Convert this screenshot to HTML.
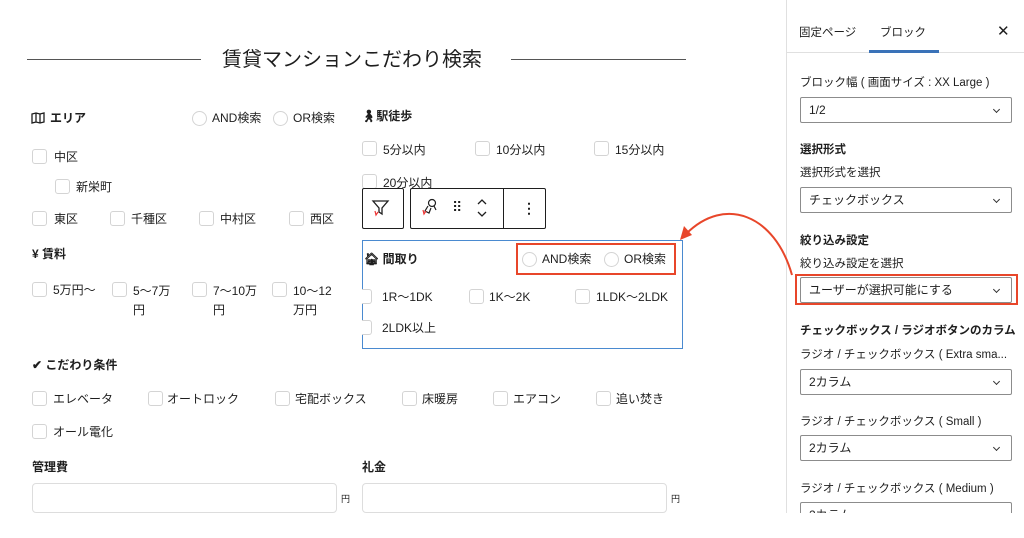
<!DOCTYPE html>
<html><head><meta charset="utf-8"><style>
*{margin:0;padding:0;box-sizing:border-box}
body{width:1024px;height:538px;background:#fff;position:relative;overflow:hidden;font-family:"Liberation Sans","Noto Sans CJK JP",sans-serif;color:#1e1e1e;font-size:12px}
.a{position:absolute;white-space:nowrap;line-height:16px}
.cb{position:absolute;width:15px;height:15px;border:1px solid #d4d4d4;border-radius:3px;background:#fff}
.rd{position:absolute;width:15px;height:15px;border:1px solid #d4d4d4;border-radius:50%;background:#fff}
.b{font-weight:bold}
.sel{position:absolute;left:800px;width:212px;height:26px;border:1px solid #8c8c8c;border-radius:2px;font-size:12px;line-height:24px;padding-left:8px}
.sel:after{content:"";position:absolute;right:12px;top:9px;width:4px;height:4px;border-right:1.2px solid #333;border-bottom:1.2px solid #333;transform:rotate(45deg)}
.inp{position:absolute;height:30px;border:1px solid #ddd;border-radius:4px}
.sb{font-size:11.5px}
</style></head><body>
<div style="position:absolute;left:27px;top:59px;width:174px;height:1px;background:#555"></div>
<div style="position:absolute;left:511px;top:59px;width:175px;height:1px;background:#555"></div>
<div class="a" style="left:222px;top:47px;font-size:20px;line-height:26px">賃貸マンションこだわり検索</div>

<!-- エリア -->
<svg class="a" style="left:31px;top:112px" width="14" height="12" viewBox="0 0 14 12"><path d="M1 2l4-1 4 1 4-1v9l-4 1-4-1-4 1z M5 1v9 M9 2v9" fill="none" stroke="#1e1e1e" stroke-width="1.3"/></svg>
<div class="a b" style="left:50px;top:110px">エリア</div>
<div class="rd" style="left:192px;top:111px"></div><div class="a" style="left:212px;top:110px">AND検索</div>
<div class="rd" style="left:273px;top:111px"></div><div class="a" style="left:293px;top:110px">OR検索</div>
<div class="cb" style="left:32px;top:149px"></div><div class="a" style="left:54px;top:149px">中区</div>
<div class="cb" style="left:55px;top:179px"></div><div class="a" style="left:76px;top:179px">新栄町</div>
<div class="cb" style="left:32px;top:211px"></div><div class="a" style="left:54px;top:211px">東区</div>
<div class="cb" style="left:110px;top:211px"></div><div class="a" style="left:131px;top:211px">千種区</div>
<div class="cb" style="left:199px;top:211px"></div><div class="a" style="left:220px;top:211px">中村区</div>
<div class="cb" style="left:289px;top:211px"></div><div class="a" style="left:310px;top:211px">西区</div>
<div class="a b" style="left:32px;top:246px">¥ 賃料</div>
<div class="cb" style="left:32px;top:282px"></div><div class="a" style="left:53px;top:282px">5万円〜</div>
<div class="cb" style="left:112px;top:282px"></div><div class="a" style="left:133px;top:282px;line-height:19px">5〜7万<br>円</div>
<div class="cb" style="left:192px;top:282px"></div><div class="a" style="left:213px;top:282px;line-height:19px">7〜10万<br>円</div>
<div class="cb" style="left:272px;top:282px"></div><div class="a" style="left:293px;top:282px;line-height:19px">10〜12<br>万円</div>

<!-- 駅徒歩 -->
<div class="a b" style="left:361px;top:108px">🚶︎駅徒歩</div>
<div class="cb" style="left:362px;top:141px"></div><div class="a" style="left:383px;top:142px">5分以内</div>
<div class="cb" style="left:475px;top:141px"></div><div class="a" style="left:496px;top:142px">10分以内</div>
<div class="cb" style="left:594px;top:141px"></div><div class="a" style="left:615px;top:142px">15分以内</div>
<div class="cb" style="left:362px;top:174px"></div><div class="a" style="left:383px;top:175px">20分以内</div>

<!-- toolbar -->
<div style="position:absolute;left:362px;top:188px;width:42px;height:41px;border:1px solid #1e1e1e;border-radius:2px;background:#fff"></div>
<svg class="a" style="left:370px;top:198px" width="22" height="20" viewBox="0 0 22 20"><path d="M3 3h15l-6 7v6l-3-2v-4z" fill="none" stroke="#1e1e1e" stroke-width="1.3"/><path d="M5 13l1 4 2-3" fill="none" stroke="#e33" stroke-width="1.2"/></svg>
<div style="position:absolute;left:410px;top:188px;width:136px;height:41px;border:1px solid #1e1e1e;border-radius:2px;background:#fff"></div>
<div style="position:absolute;left:503px;top:188px;width:1px;height:41px;background:#1e1e1e"></div>
<svg class="a" style="left:418px;top:196px" width="24" height="24" viewBox="0 0 24 24"><circle cx="14" cy="7" r="3.5" fill="none" stroke="#1e1e1e" stroke-width="1.2"/><path d="M10 10l-3 5 4 2 2-5 M16 10l2 4" fill="none" stroke="#1e1e1e" stroke-width="1.2"/><path d="M5 14l1 4 2-3" fill="none" stroke="#e33" stroke-width="1.2"/></svg>
<div class="a" style="left:452px;top:200px;font-size:14px;line-height:14px;letter-spacing:-1px">⠿</div>
<svg class="a" style="left:476px;top:197px" width="12" height="22" viewBox="0 0 12 22"><path d="M2 7l4-4 4 4 M2 15l4 4 4-4" fill="none" stroke="#1e1e1e" stroke-width="1.3"/></svg>
<div class="a" style="left:522px;top:200px;font-size:14px;line-height:16px;font-weight:bold">⋮</div>

<!-- 間取り -->
<div style="position:absolute;left:362px;top:240px;width:321px;height:109px;border:1px solid #4a8ad0"></div>
<div class="a b" style="left:364px;top:251px">🏠︎ 間取り</div>
<div style="position:absolute;left:516px;top:243px;width:160px;height:32px;border:2px solid #e8462a"></div>
<div class="rd" style="left:522px;top:252px"></div><div class="a" style="left:542px;top:251px">AND検索</div>
<div class="rd" style="left:604px;top:252px"></div><div class="a" style="left:624px;top:251px">OR検索</div>
<div class="cb" style="left:362px;top:289px;border-left:none;border-radius:0 3px 3px 0;width:10px"></div><div class="a" style="left:382px;top:289px">1R〜1DK</div>
<div class="cb" style="left:469px;top:289px"></div><div class="a" style="left:489px;top:289px">1K〜2K</div>
<div class="cb" style="left:575px;top:289px"></div><div class="a" style="left:596px;top:289px">1LDK〜2LDK</div>
<div class="cb" style="left:362px;top:320px;border-left:none;border-radius:0 3px 3px 0;width:10px"></div><div class="a" style="left:382px;top:320px">2LDK以上</div>

<!-- こだわり -->
<div class="a b" style="left:32px;top:357px">✔ こだわり条件</div>
<div class="cb" style="left:32px;top:391px"></div><div class="a" style="left:53px;top:391px">エレベータ</div>
<div class="cb" style="left:148px;top:391px"></div><div class="a" style="left:167px;top:391px">オートロック</div>
<div class="cb" style="left:275px;top:391px"></div><div class="a" style="left:295px;top:391px">宅配ボックス</div>
<div class="cb" style="left:402px;top:391px"></div><div class="a" style="left:422px;top:391px">床暖房</div>
<div class="cb" style="left:493px;top:391px"></div><div class="a" style="left:513px;top:391px">エアコン</div>
<div class="cb" style="left:596px;top:391px"></div><div class="a" style="left:616px;top:391px">追い焚き</div>
<div class="cb" style="left:32px;top:424px"></div><div class="a" style="left:53px;top:424px">オール電化</div>
<div class="a b" style="left:32px;top:459px">管理費</div>
<div class="a b" style="left:362px;top:459px">礼金</div>
<div class="inp" style="left:32px;top:483px;width:305px"></div><div class="a" style="left:341px;top:491px;font-size:9px">円</div>
<div class="inp" style="left:362px;top:483px;width:305px"></div><div class="a" style="left:671px;top:491px;font-size:9px">円</div>
<div style="position:absolute;left:0;top:513px;width:1024px;height:25px;background:#fff"></div>

<!-- sidebar -->
<div style="position:absolute;left:786px;top:0;width:238px;height:513px;border-left:1px solid #e0e0e0;background:#fff;overflow:hidden">
<div style="position:absolute;left:0;top:52px;width:238px;height:1px;background:#e0e0e0"></div>
<div style="position:absolute;left:82px;top:50px;width:70px;height:3px;background:#3a72b8"></div>
</div>
<div class="a sb" style="left:799px;top:25px">固定ページ</div>
<div class="a sb" style="left:880px;top:25px">ブロック</div>
<div class="a" style="left:997px;top:24px;font-size:15px">✕</div>
<div class="a sb" style="left:800px;top:75px">ブロック幅 ( 画面サイズ : XX Large )</div>
<div class="sel" style="top:97px">1/2</div>
<div class="a sb b" style="left:800px;top:142px">選択形式</div>
<div class="a sb" style="left:800px;top:165px">選択形式を選択</div>
<div class="sel" style="top:187px">チェックボックス</div>
<div class="a sb b" style="left:800px;top:233px">絞り込み設定</div>
<div class="a sb" style="left:800px;top:256px">絞り込み設定を選択</div>
<div style="position:absolute;left:795px;top:274px;width:223px;height:31px;border:2px solid #e8462a"></div>
<div class="sel" style="top:277px">ユーザーが選択可能にする</div>
<div class="a sb b" style="left:800px;top:323px">チェックボックス / ラジオボタンのカラム</div>
<div class="a sb" style="left:800px;top:347px">ラジオ / チェックボックス ( Extra sma...</div>
<div class="sel" style="top:369px">2カラム</div>
<div class="a sb" style="left:800px;top:414px">ラジオ / チェックボックス ( Small )</div>
<div class="sel" style="top:435px">2カラム</div>
<div class="a sb" style="left:800px;top:481px">ラジオ / チェックボックス ( Medium )</div>
<div style="position:absolute;left:786px;top:502px;width:238px;height:11px;overflow:hidden"><div class="sel" style="top:0;left:14px">2カラム</div></div>

<svg style="position:absolute;left:0;top:0" width="1024" height="538"><path d="M792 275 C775 215 725 195 686 234" fill="none" stroke="#e8462a" stroke-width="2"/><path d="M680 240 L684 226 L692 235 Z" fill="#e8462a"/></svg>
</body></html>
